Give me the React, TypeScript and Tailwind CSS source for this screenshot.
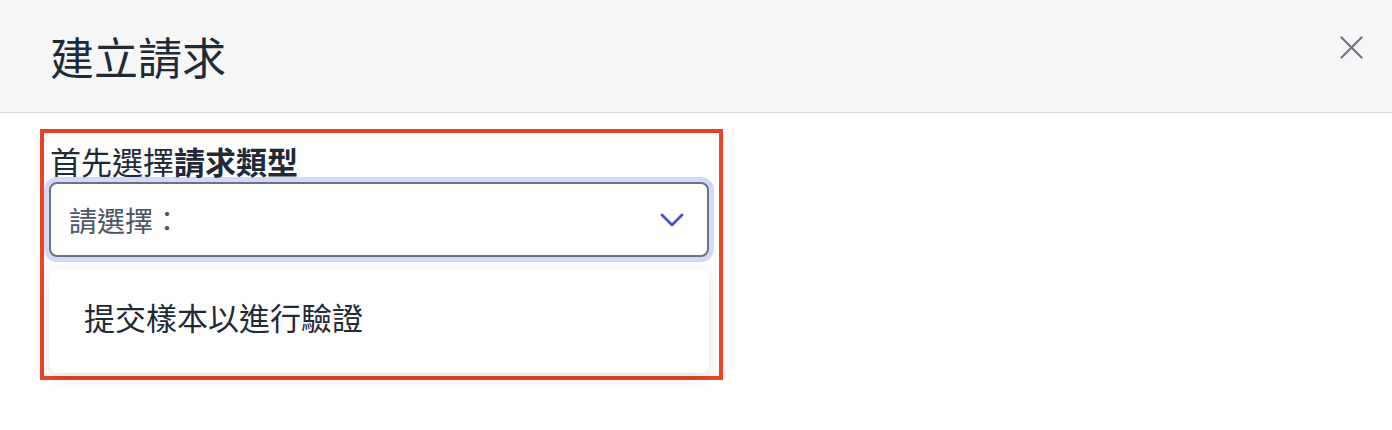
export default function App() {
  return (
    <div className="w-[1392px] h-[430px] bg-white font-['Noto_Sans_CJK_TC','Noto_Sans',sans-serif] text-[#1f2937]">
      <header className="h-[113px] bg-[#f6f6f6] border-b border-[#d8d8dc] flex items-center justify-between pl-[50px] pr-[29px]">
        <h1 className="text-[44px] leading-none text-[#1f2a37]">建立請求</h1>
        <button className="mb-[18px] text-[#6b7280]" aria-label="close">
          <svg width="23" height="23" viewBox="0 0 23 23" fill="none" stroke="currentColor" strokeWidth="2.2" strokeLinecap="round">
            <path d="M1.5 1.5 21.5 21.5" />
            <path d="M21.5 1.5 1.5 21.5" />
          </svg>
        </button>
      </header>

      <div className="pl-[40px] pt-[16px]">
        <div className="w-[683px] border-4 border-[#e8442b] pl-[5px] pr-[10px] pt-[13px] pb-[3px]">
          <label className="block text-[31px] leading-[30px] pl-[1px]">
            首先選擇<span className="font-bold">請求類型</span>
          </label>

          <div className="mt-[6px] h-[75px] rounded-[8px] border-2 border-[#6b7280] ring-[5px] ring-[#d5d9f8] bg-white flex items-center justify-between pl-[18px] pr-[23px]">
            <span className="text-[28px] text-[#4b5563]">請選擇：</span>
            <svg width="24" height="14" viewBox="0 0 24 14" fill="none" stroke="#4352d4" strokeWidth="2.8" strokeLinecap="round" strokeLinejoin="round">
              <path d="M2 2 12 12 22 2" />
            </svg>
          </div>

          <ul className="mt-[12px] h-[104px] rounded-[8px] bg-white shadow-[0_4px_14px_rgba(0,0,0,0.12)] flex items-center pl-[35px] pb-[8px]">
            <li className="text-[31px]">提交樣本以進行驗證</li>
          </ul>
        </div>
      </div>
    </div>
  );
}
